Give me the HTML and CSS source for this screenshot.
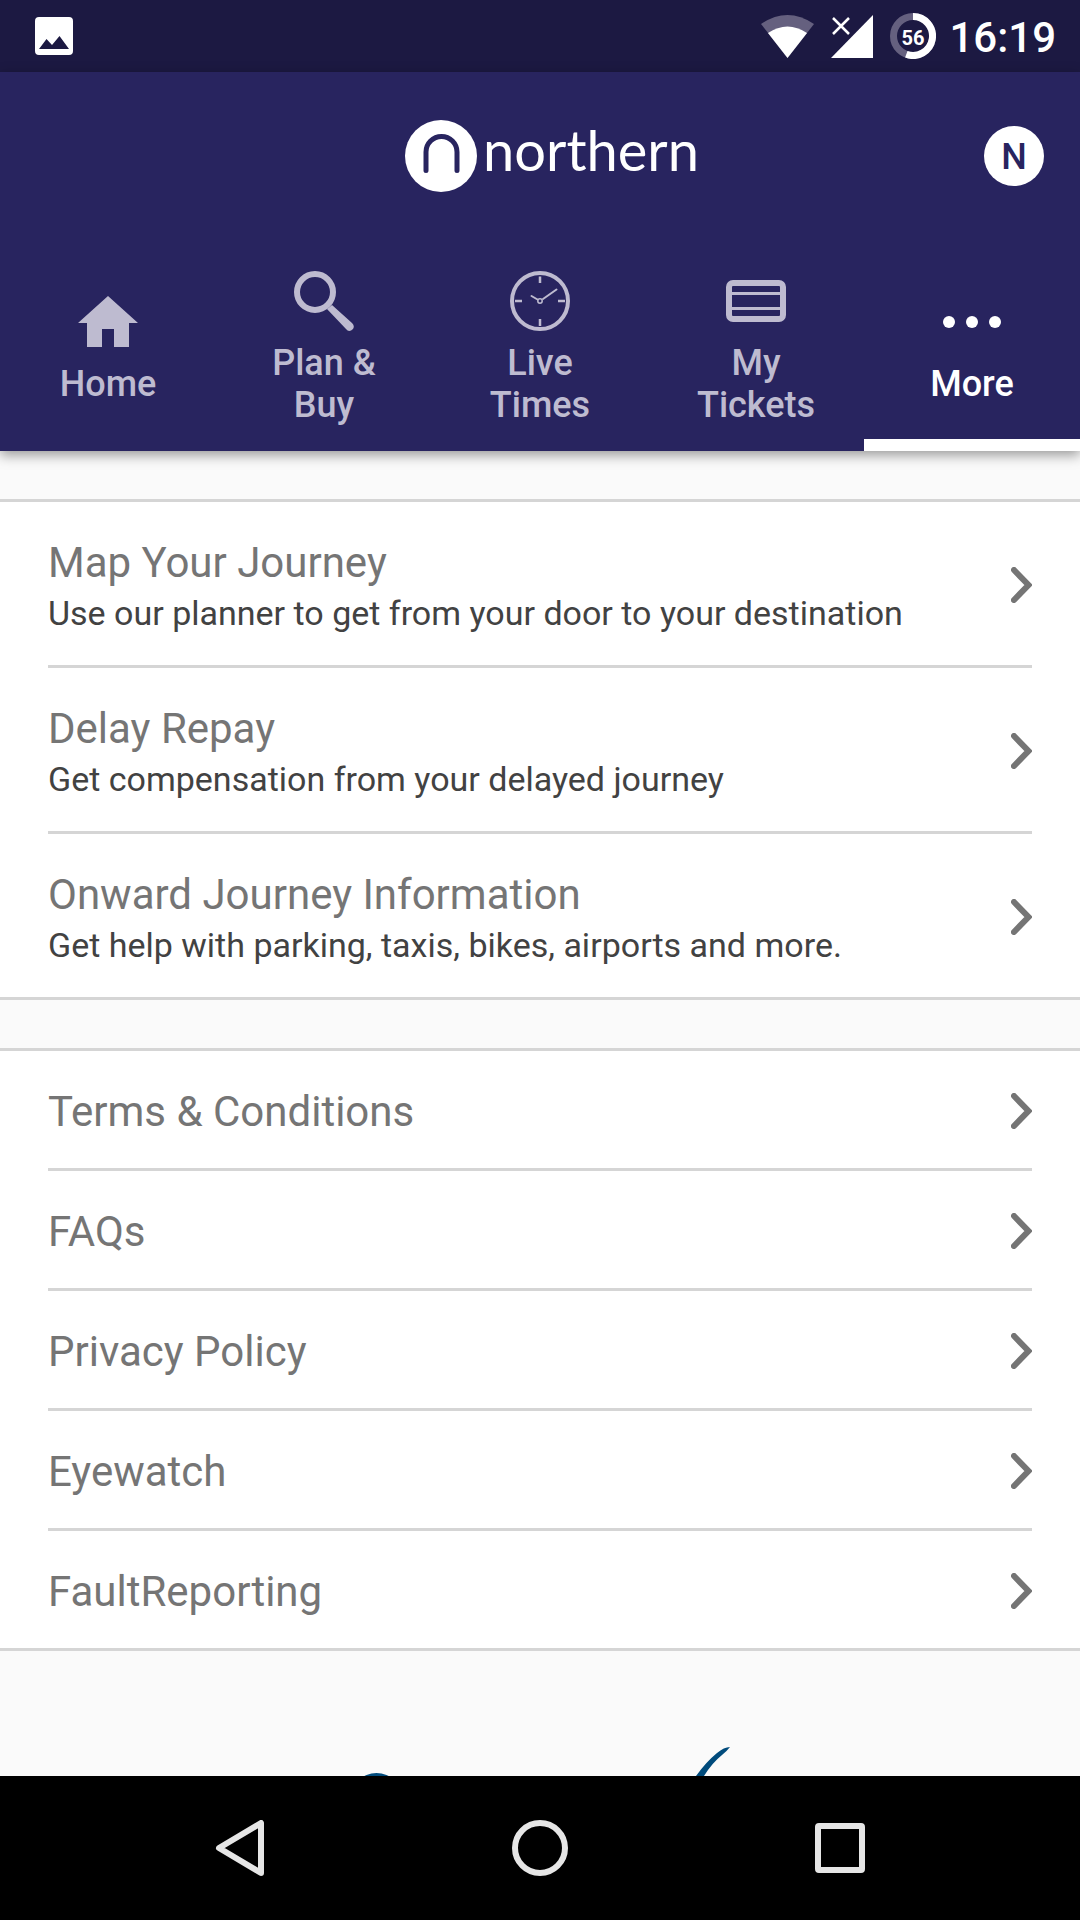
FILE: index.html
```html
<!DOCTYPE html>
<html lang="en">
<head>
<meta charset="utf-8">
<meta name="viewport" content="width=device-width, initial-scale=1">
<title>Northern – More</title>
<link rel="stylesheet" href="styles.css">
</head>
<body>
<div class="status-bar">
  <svg class="status-photo" viewBox="0 0 38 38" aria-hidden="true"><path fill="#fff" fill-rule="evenodd" d="M4 0H34Q38 0 38 4V34Q38 38 34 38H4Q0 38 0 34V4Q0 0 4 0ZM4 32H34L24.500 19L17 28L11.500 22Z"/></svg>
  <div class="status-end">
    <div class="status-icons">
      <svg class="status-wifi" viewBox="0 0 53 43" aria-hidden="true"><path fill="#65607f" d="M0 9Q26.500-9 53 9L26.500 43Z"/><path fill="#fff" d="M7 18Q26.500 5 46 18L26.500 43Z"/></svg>
      <svg class="status-signal" viewBox="0 0 42 43" aria-hidden="true"><path fill="#fff" d="M42 0V43H0Z"/><path stroke="#fff" stroke-width="2.500" d="M2 3L18 19M18 3L2 19"/></svg>
      <svg class="status-battery" viewBox="0 0 46 46" role="img" aria-label="Battery 56%"><circle cx="23" cy="23" r="19.500" fill="none" stroke="#65607f" stroke-width="7"/><path fill="none" stroke="#fff" stroke-width="7" d="M23 3.500A19.500 19.500 0 1 1 16.300 41.300"/><text class="battery-level" x="23" y="32" text-anchor="middle">56</text></svg>
    </div>
    <time class="status-time">16:19</time>
  </div>
</div>

<header class="header">
  <div class="brand-row">
    <a class="brand" href="#">
      <svg class="brand-mark" viewBox="0 0 72 72" aria-hidden="true"><circle cx="36" cy="36" r="36" fill="#fff"/><path fill="none" stroke="#28245f" stroke-width="5" stroke-linecap="round" d="M21 50.500V32A15.500 15.500 0 0 1 52 32V50.500" /></svg>
      <span class="brand-name">northern</span>
    </a>
    <button class="avatar" type="button" aria-label="Account N">N</button>
  </div>
  <nav class="tabs">
    <a class="tab" href="#">
      <svg class="tab-icon" viewBox="0 0 60 60" aria-hidden="true"><path fill="currentColor" d="M30 4L60 31H51V55H36V37H24V55H9V31H0Z"/></svg>
      <span class="tab-label">Home</span>
    </a>
    <a class="tab" href="#">
      <svg class="tab-icon" viewBox="0 0 60 60" aria-hidden="true"><circle cx="21" cy="21" r="18" fill="none" stroke="currentColor" stroke-width="6"/><path fill="currentColor" d="M33 38L38 34L58 52Q61 55 59 58Q55 62 52 58Z"/></svg>
      <span class="tab-label">Plan &amp; Buy</span>
    </a>
    <a class="tab" href="#">
      <svg class="tab-icon" viewBox="0 0 60 60" aria-hidden="true"><g fill="none" stroke="currentColor"><circle cx="30" cy="30" r="28" stroke-width="4"/><circle cx="30" cy="30" r="2.200" stroke-width="1.500"/><path stroke-width="2.500" d="M30 5.500V12M30 48V55M5 30H12M48 30H55"/><path stroke-width="2" stroke-linecap="round" d="M27.500 28.500L21.500 25M33 28L46.500 18.500"/></g></svg>
      <span class="tab-label">Live Times</span>
    </a>
    <a class="tab" href="#">
      <svg class="tab-icon" viewBox="0 0 60 60" aria-hidden="true"><g fill="none" stroke="currentColor"><rect x="3" y="12" width="54" height="36" rx="4" stroke-width="6"/><path stroke-width="3" d="M3 22.500H57M3 37.500H57"/></g></svg>
      <span class="tab-label">My Tickets</span>
    </a>
    <a class="tab tab-active" href="#" aria-current="page">
      <svg class="tab-icon" viewBox="0 0 60 60" aria-hidden="true"><g fill="currentColor"><circle cx="7" cy="30" r="6"/><circle cx="30" cy="30" r="6"/><circle cx="53" cy="30" r="6"/></g></svg>
      <span class="tab-label">More</span>
    </a>
  </nav>
</header>

<svg class="symbols" aria-hidden="true"><symbol id="chevron" viewBox="0 0 21 36"><path fill="none" stroke="#757575" stroke-width="6" stroke-linecap="round" d="M3 3L17.500 18L3 33"/></symbol></svg>

<main class="content">
  <ul class="menu">
    <li class="menu-item"><a class="menu-link" href="#"><span class="menu-text"><span class="menu-title">Map Your Journey</span><span class="menu-note">Use our planner to get from your door to your destination</span></span><svg class="chevron" aria-hidden="true"><use href="#chevron"/></svg></a></li>
    <li class="menu-item"><a class="menu-link" href="#"><span class="menu-text"><span class="menu-title">Delay Repay</span><span class="menu-note">Get compensation from your delayed journey</span></span><svg class="chevron" aria-hidden="true"><use href="#chevron"/></svg></a></li>
    <li class="menu-item"><a class="menu-link" href="#"><span class="menu-text"><span class="menu-title">Onward Journey Information</span><span class="menu-note">Get help with parking, taxis, bikes, airports and more.</span></span><svg class="chevron" aria-hidden="true"><use href="#chevron"/></svg></a></li>
  </ul>
  <ul class="menu">
    <li class="menu-item"><a class="menu-link" href="#"><span class="menu-text"><span class="menu-title">Terms &amp; Conditions</span></span><svg class="chevron" aria-hidden="true"><use href="#chevron"/></svg></a></li>
    <li class="menu-item"><a class="menu-link" href="#"><span class="menu-text"><span class="menu-title">FAQs</span></span><svg class="chevron" aria-hidden="true"><use href="#chevron"/></svg></a></li>
    <li class="menu-item"><a class="menu-link" href="#"><span class="menu-text"><span class="menu-title">Privacy Policy</span></span><svg class="chevron" aria-hidden="true"><use href="#chevron"/></svg></a></li>
    <li class="menu-item"><a class="menu-link" href="#"><span class="menu-text"><span class="menu-title">Eyewatch</span></span><svg class="chevron" aria-hidden="true"><use href="#chevron"/></svg></a></li>
    <li class="menu-item"><a class="menu-link" href="#"><span class="menu-text"><span class="menu-title">FaultReporting</span></span><svg class="chevron" aria-hidden="true"><use href="#chevron"/></svg></a></li>
  </ul>
  <div class="partner">
    <svg class="partner-logo" viewBox="0 0 400 30" aria-hidden="true"><g fill="#004b7c"><circle cx="36.500" cy="53" r="26"/><path d="M356 30Q366 16 377 7Q384 1 390 1Q387 5 382 9Q372 17 364 30Z"/></g></svg>
  </div>
</main>

<div class="system-nav">
  <button class="system-button" type="button" aria-label="Back"><svg class="system-icon" viewBox="0 0 56 56" aria-hidden="true"><path d="M49 3V53L7 28Z"/></svg></button>
  <button class="system-button" type="button" aria-label="Home"><svg class="system-icon" viewBox="0 0 56 56" aria-hidden="true"><circle cx="28" cy="28" r="25"/></svg></button>
  <button class="system-button" type="button" aria-label="Recent apps"><svg class="system-icon" viewBox="0 0 56 56" aria-hidden="true"><rect x="6" y="6" width="44" height="44" rx="1"/></svg></button>
</div>
</body>
</html>
```

FILE: styles.css
```css
* {
  box-sizing: border-box;
}

body {
  margin: 0;
  min-height: 100vh;
  display: flex;
  flex-direction: column;
  background: #fafafa;
  font-family: Roboto, "Liberation Sans", sans-serif;
}

a {
  color: inherit;
  text-decoration: none;
}

button {
  border: 0;
  padding: 0;
  font: inherit;
}

svg {
  display: block;
  flex: none;
}

.symbols {
  position: absolute;
  width: 0;
  height: 0;
}

/* Status bar */
.status-bar {
  display: flex;
  align-items: center;
  justify-content: space-between;
  height: 72px;
  padding: 0 24px 0 35px;
  background: #1c1942;
  color: #fff;
}

.status-photo {
  width: 38px;
  height: 38px;
}

.status-end {
  display: flex;
  align-items: center;
  gap: 13px;
}

.status-icons {
  display: flex;
  align-items: center;
  gap: 17px;
}

.status-wifi {
  width: 53px;
  height: 43px;
}

.status-signal {
  width: 42px;
  height: 43px;
}

.status-battery {
  width: 46px;
  height: 46px;
}

.battery-level {
  fill: #fff;
  font-size: 20px;
  font-weight: 700;
}

.status-time {
  padding-top: 3px;
  font-size: 42px;
  font-weight: 500;
  line-height: 48px;
}

/* Header */
.header {
  background: #28245f;
  color: #fff;
  box-shadow: 0 4px 12px rgba(0, 0, 0, 0.4);
  z-index: 1;
}

.brand-row {
  display: grid;
  grid-template-columns: 1fr auto 1fr;
  align-items: center;
  height: 168px;
  padding: 0 36px 0 60px;
}

.brand {
  grid-column: 2;
  display: flex;
  align-items: center;
  gap: 6px;
}

.brand-mark {
  width: 72px;
  height: 72px;
}

.brand-name {
  padding-bottom: 12px;
  font-family: Lato, "Liberation Sans", sans-serif;
  font-size: 56px;
  line-height: 60px;
}

.avatar {
  justify-self: end;
  width: 60px;
  height: 60px;
  border-radius: 50%;
  background: #fff;
  color: #28245f;
  font-size: 36px;
  font-weight: 500;
  line-height: 62px;
}

.tabs {
  display: grid;
  grid-template-columns: repeat(5, 1fr);
}

.tab {
  display: flex;
  flex-direction: column;
  align-items: center;
  justify-content: center;
  gap: 11px;
  height: 211px;
  padding: 18px 48px 12px;
  border-bottom: 0 solid #fff;
  color: #bebbd0;
  font-size: 36px;
  font-weight: 500;
  line-height: 42px;
  text-align: center;
}

.tab-active {
  padding-bottom: 0;
  border-bottom-width: 12px;
  color: #fff;
}

.tab-icon {
  width: 60px;
  height: 60px;
}

/* Menu lists */
.content {
  flex: 1;
  display: flex;
  flex-direction: column;
}

.menu {
  margin: 48px 0 0;
  padding: 0 48px;
  list-style: none;
  background: #fff;
  border: solid #d5d5d5;
  border-width: 3px 0;
}

.menu-item + .menu-item {
  border-top: 3px solid #d5d5d5;
}

.menu-link {
  display: flex;
  align-items: center;
  justify-content: space-between;
  padding: 35px 0 32px;
}

.menu-text {
  display: flex;
  flex-direction: column;
  gap: 6px;
  padding-top: 2px;
}

.menu-title {
  color: #757575;
  font-size: 42px;
  line-height: 48px;
}

.menu-note {
  color: #424242;
  font-size: 34px;
  line-height: 40px;
}

.chevron {
  width: 21px;
  height: 36px;
}

/* Partner logo, cut off by the system navigation */
.partner {
  flex: 1;
  display: flex;
  align-items: flex-end;
  justify-content: center;
  min-height: 96px;
}

.partner-logo {
  width: 400px;
  height: 30px;
}

/* System navigation */
.system-nav {
  display: grid;
  grid-template-columns: repeat(3, 1fr);
  height: 144px;
  padding: 0 90px;
  background: #000;
}

.system-button {
  display: flex;
  align-items: center;
  justify-content: center;
  background: none;
}

.system-icon {
  width: 56px;
  height: 56px;
  fill: none;
  stroke: #e6e6e6;
  stroke-width: 6;
  stroke-linejoin: round;
}
```
